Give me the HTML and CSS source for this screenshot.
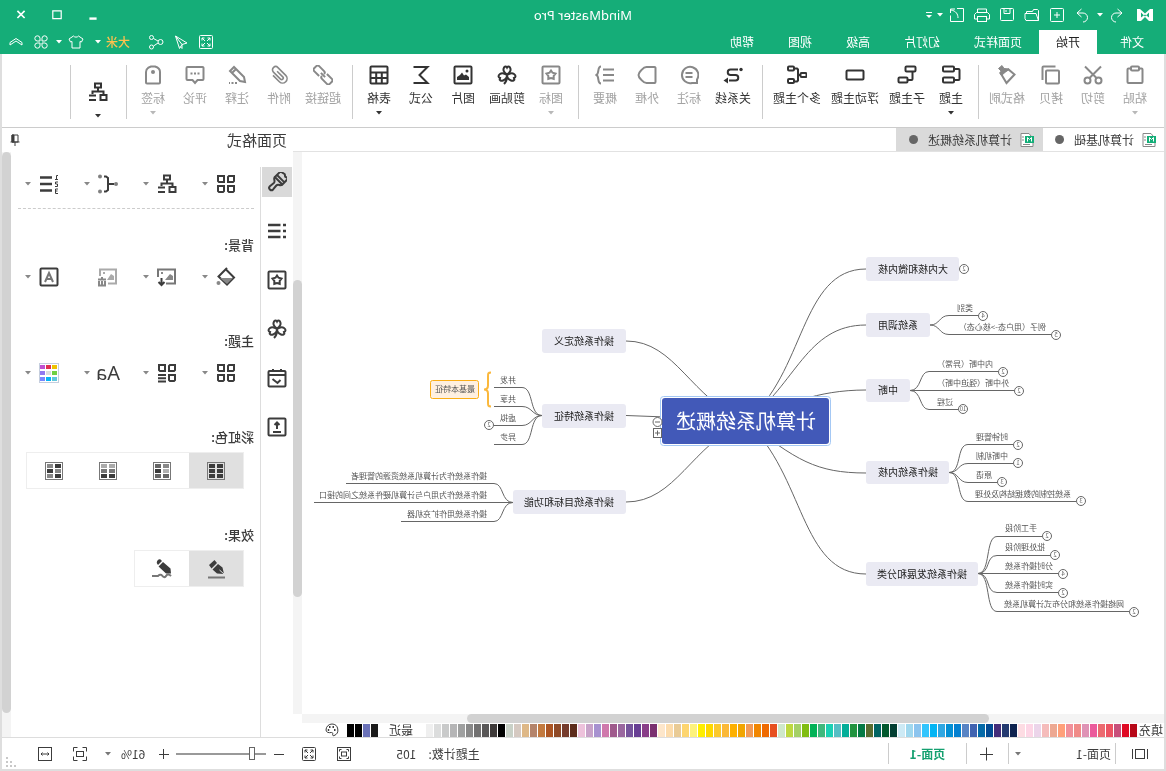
FILE: index.html
```html
<!DOCTYPE html>
<html lang="zh-CN">
<head>
<meta charset="utf-8">
<title>MindMaster Pro</title>
<link rel="stylesheet" href="styles.css">
</head>
<body>
<svg class="sprite" aria-hidden="true">
  <symbol id="caret" viewBox="0 0 6 4"><path d="M0 0h6L3 3.5z" fill="currentColor"/></symbol>
  <symbol id="undo" viewBox="0 0 20 20"><path d="M9.500 4 5 8l4.500 4M5 8h6a4.500 4.500 0 0 1 0 9"/></symbol>
  <symbol id="redo" viewBox="0 0 20 20"><path d="M10.500 4 15 8l-4.500 4M15 8H9a4.500 4.500 0 0 0 0 9"/></symbol>
  <symbol id="new" viewBox="0 0 20 20"><rect x="3.500" y="3.500" width="13" height="13" rx="1"/><path d="M10 7v6M7 10h6"/></symbol>
  <symbol id="open" viewBox="0 0 20 20"><path d="M3.500 15.500v-10l1-1h4l1 2h6v2M3.500 15.500 6 8.500h11v5l-1 2z"/></symbol>
  <symbol id="save" viewBox="0 0 20 20"><rect x="3.500" y="3.500" width="13" height="12" rx="1"/><path d="M7 3.500v5h6v-5M11 5v2"/></symbol>
  <symbol id="print" viewBox="0 0 20 20"><path d="M5.500 7V4h9v3M5 14H2.500V9.500l2-2h11l2 2V14H15"/><rect x="5.500" y="11.500" width="9" height="5"/></symbol>
  <symbol id="export" viewBox="0 0 20 20"><path d="M10 3.500H3.500v13h13v-6M9 13c0-4 2-7 7-8M12 4h4.500v4"/></symbol>
  <symbol id="more" viewBox="0 0 10 10"><path d="M2 2.500h6" /><path d="M2 5h6L5 8z" fill="currentColor" stroke="none"/></symbol>
  <symbol id="full" viewBox="0 0 20 20"><rect x="3.500" y="3.500" width="13" height="13" rx="1"/><path d="M6 8.500V6h2.500M11.500 6H14v2.500M14 11.500V14h-2.500M8.500 14H6v-2.500M6 6l3 3M14 6l-3 3M14 14l-3-3M6 14l3-3"/></symbol>
  <symbol id="send" viewBox="0 0 20 20"><path d="M15.500 4 4 11l5 1.500 2.500 4zM15.500 4 9 12.500v4l2-2"/></symbol>
  <symbol id="share" viewBox="0 0 20 20"><circle cx="5.500" cy="10" r="2.500"/><circle cx="14.500" cy="5.500" r="2"/><circle cx="14.500" cy="15" r="2"/><path d="m8 9 4.500-2.500M8 11l4.500 3"/></symbol>
  <symbol id="shirt" viewBox="0 0 20 20"><path d="M7.500 4 3 7l1.500 3 1.500-.5v6.500h8V9.500l1.500.5L17 7l-4.500-3c-1 1.500-4 1.500-5 0z"/></symbol>
  <symbol id="clover4" viewBox="0 0 20 20"><path d="M9 9H6.200A2.600 2.600 0 1 1 9 6.200zM11 9h2.800A2.600 2.600 0 1 0 11 6.200zM9 11H6.200A2.600 2.600 0 1 0 9 13.800zM11 11h2.800A2.600 2.600 0 1 1 11 13.800z"/></symbol>
  <symbol id="up" viewBox="0 0 20 20"><path d="m4 10.500 6-4 6 4v2.500l-6-4-6 4z"/></symbol>

  <symbol id="paste" viewBox="0 0 20 20"><path d="M6 3.500H3.500a1 1 0 0 0-1 1V17a1 1 0 0 0 1 1h13a1 1 0 0 0 1-1V4.500a1 1 0 0 0-1-1H14"/><rect x="6" y="1.500" width="8" height="4" rx="1"/></symbol>
  <symbol id="cut" viewBox="0 0 20 20"><path d="m2 1.500 11.500 11.500M18 1.500 6.500 13"/><circle cx="4.500" cy="15.500" r="3"/><circle cx="15.500" cy="15.500" r="3"/></symbol>
  <symbol id="copy" viewBox="0 0 20 20"><rect x="2" y="5.500" width="13" height="13" rx="1"/><path d="M5.500 2h12a1 1 0 0 1 1 1v12.500" transform="translate(0 -.5)"/></symbol>
  <symbol id="format" viewBox="0 0 20 20"><path d="m2.500 9.500 6-5 8 3.500-6 10z"/><path d="m8 4 5-.5L15 .500l3.500 3L16 6l1 3-2 1-7-6z" fill="currentColor" stroke-width="1"/></symbol>
  <symbol id="topic" viewBox="0 0 20 20"><path d="M7 4H2.500a1 1 0 0 0-1 1v9a1 1 0 0 0 1 1H7"/><rect x="7" y="1.500" width="11" height="5" rx="1"/><rect x="7" y="12.500" width="11" height="5" rx="1"/></symbol>
  <symbol id="subtopic" viewBox="0 0 20 20"><rect x="1.500" y="1.500" width="10" height="5" rx="1"/><rect x="9.500" y="12.500" width="9" height="5" rx="1"/><path d="M4.500 6.500V14a1 1 0 0 0 1 1h4"/></symbol>
  <symbol id="float" viewBox="0 0 20 20"><rect x="1.500" y="5.500" width="17" height="9" rx="1"/></symbol>
  <symbol id="multi" viewBox="0 0 20 20"><rect x="0.500" y="8" width="6" height="4" rx="1"/><rect x="13" y="1.500" width="6" height="4" rx="1"/><rect x="13" y="14" width="6" height="4" rx="1"/><path d="M6.500 10H9M13 3.500h-3l-1 1v11l1 1h3"/></symbol>
  <symbol id="relation" viewBox="0 0 20 20"><circle cx="2" cy="4.500" r="1.700" fill="currentColor" stroke="none"/><path d="M5 4.500h7.500a2.700 2.700 0 0 1 0 5.500h-5a2.700 2.700 0 0 0 0 5.500H14"/><path d="M15 12.500v6l4.500-3z" fill="currentColor" stroke="none"/></symbol>
  <symbol id="callout" viewBox="0 0 20 20"><path d="M2 18v-3.500A8.200 8.200 0 1 1 7 18zM6.500 8h7M6.500 12h7"/></symbol>
  <symbol id="boundary" viewBox="0 0 20 20"><path d="M2.500 2h8c3 0 4 2 5.500 3.500 2 2 2.500 3 2.500 4.500s-.5 2.500-2.500 4.500C14.500 16 13.500 18 10.500 18h-8a1 1 0 0 1-1-1V3a1 1 0 0 1 1-1z"/></symbol>
  <symbol id="summary" viewBox="0 0 20 20"><path d="M1 4.500h11M1 10h11M1 15.500h11M14 1.500c4 0 1.500 7 4.500 8.500-3 1.500-.5 8.500-4.500 8.500"/></symbol>
  <symbol id="star" viewBox="0 0 20 20"><rect x="1.500" y="1.500" width="17" height="17" rx="1"/><path d="m10 5.500 1.500 2.200 3 .8-1.800 2.300v3L10 13l-2.700.8v-3L5.500 8.500l3-.8z"/></symbol>
  <symbol id="clover" viewBox="0 0 20 20"><path d="M10 9.500C7 7.500 5.500 5 7 2.500c1.300-1.500 2.500-1 3 0 .5-1 1.700-1.500 3 0 1.500 2.500 0 5-3 7zM10 10c-3-2-5-2.500-7-1-2 1.500-2 3 0 4-1 2 1 3.500 3 2.500 2.500-1 4-3 4-5.500zM10 10c3-2 5-2.500 7-1 2 1.500 2 3 0 4 1 2-1 3.500-3 2.500-2.500-1-4-3-4-5.500zM10 10c-.2 4 .5 6.500 3 9"/></symbol>
  <symbol id="picture" viewBox="0 0 20 20"><rect x="1.500" y="1.500" width="17" height="17" rx="1"/><path d="M4 15v-3l3-2.500 2 1L11 7.500l2 2.500 3 2v3z" fill="currentColor" stroke="none"/><circle cx="6" cy="6" r="1.500" fill="currentColor" stroke="none"/></symbol>
  <symbol id="sigma" viewBox="0 0 20 20"><path d="M17.500 2h-14l8 8-8 8h14"/></symbol>
  <symbol id="table" viewBox="0 0 20 20"><rect x="1.500" y="1.500" width="17" height="17" rx="1"/><path d="M1.500 7.500h17M1.500 13h17M7.200 7.500v11M12.800 7.500v11"/></symbol>
  <symbol id="link" viewBox="0 0 20 20"><g transform="rotate(-45 10 10)"><path d="M8 6.500H1a2 2 0 0 0-2 2v3a2 2 0 0 0 2 2h7a2 2 0 0 0 2-2M12 13.500h7a2 2 0 0 0 2-2v-3a2 2 0 0 0-2-2h-7a2 2 0 0 0-2 2M7 10h6"/></g></symbol>
  <symbol id="clip" viewBox="0 0 20 20"><path d="M14.500 6v9a4.500 4.500 0 0 1-9 0V4a3.200 3.200 0 0 1 6.400 0v10a1.600 1.600 0 0 1-3.200 0V6" transform="rotate(45 10 10)" stroke-width="1.600"/></symbol>
  <symbol id="pencil" viewBox="0 0 20 20"><path d="m2 17 1-5L13 2l4 4L7 16zM11 4l4 4"/><path d="M10 18h8" stroke-dasharray="2 1.500"/></symbol>
  <symbol id="comment" viewBox="0 0 20 20"><path d="M2.500 2h15a1 1 0 0 1 1 1v11a1 1 0 0 1-1 1h-5L10 18l-2.500-3h-5a1 1 0 0 1-1-1V3a1 1 0 0 1 1-1z"/><path d="M5.500 8.500h9" stroke-dasharray="2 1.500"/></symbol>
  <symbol id="tag" viewBox="0 0 20 20"><path d="M8 1.500h4c3 1 5 3 5 5.500v10.500a1 1 0 0 1-1 1H4a1 1 0 0 1-1-1V7c0-2.500 2-4.500 5-5.500z"/><circle cx="10" cy="7" r="2" fill="currentColor" stroke="none"/></symbol>
  <symbol id="layout" viewBox="0 0 20 20"><rect x="7" y="1.500" width="6" height="4"/><path d="M10 5.500v3.500M4.500 12V9.500h11V12M12 13.500h7M12 18h7"/><rect x="1.500" y="13" width="6" height="5"/></symbol>

  <symbol id="doc" viewBox="0 0 14 14"><path d="M5 .5h8v13H1v-8z" fill="#fff" stroke="#888"/><path d="M10 4h2M10 7h2M4 11.500h7" stroke="#888"/><rect x="0" y="3" width="9" height="7" fill="#13ae78" stroke="none"/><path d="M2.500 8.500v-4l2 2 2-2v4" stroke="#fff"/></symbol>
  <symbol id="pin" viewBox="0 0 12 12"><path d="M3 1h6v7H3zM1.500 8h9M6 8v4"/><path d="M7 1h2v7H7z" fill="currentColor"/></symbol>
  <symbol id="brush" viewBox="0 0 20 20"><path d="M4.500-.5 8 .5l2-1.500 5 1V8h-10.500zM4.500 5H15M4.500 8c0 3 3.500 2 3.500 5l-.5 5a2.300 2.300 0 0 0 4.600 0l-.6-5c0-3 3.500-2 3.500-5" transform="rotate(-45 10 10)"/></symbol>
  <symbol id="bullets" viewBox="0 0 20 20"><path d="M1 4h3M1 10h3M1 16h3M6.500 4H19M6.500 10H19M6.500 16H19" stroke-width="2.500"/></symbol>
  <symbol id="calendar" viewBox="0 0 20 20"><path d="M2.500 3h15a1 1 0 0 1 1 1v13.500a1 1 0 0 1-1 1h-15a1 1 0 0 1-1-1V4a1 1 0 0 1 1-1zM1.500 7h17M6 1v2M14 1v2M6.500 12l3 3 5-4"/></symbol>
  <symbol id="upload" viewBox="0 0 20 20"><rect x="1.500" y="1.500" width="17" height="17" rx="1"/><path d="M10 12V6M6 15h8M7.500 8 10 5.500 12.500 8"/></symbol>
  <symbol id="squares" viewBox="0 0 20 20"><path d="M2 2h5l1 1v5H3L2 7zM12 2h6v5l-1 1h-5zM2 12h6v5l-1 1H3l-1-1zM12 12h6v5l-1 1h-4l-1-1z"/></symbol>
  <symbol id="squarelist" viewBox="0 0 20 20"><path d="M2 2h5l1 1v5H3L2 7zM12 2h6v5l-1 1h-5zM2 12h6v5l-1 1H3l-1-1zM11 12h8M11 15.200h8M11 18.400h8"/></symbol>
  <symbol id="branch" viewBox="0 0 20 20"><path d="M4 10h6M14 2.500h-2l-2 1.500v12l2 1.500h2"/><g fill="#808080" stroke="none"><circle cx="2" cy="10" r="2"/><circle cx="18" cy="2.500" r="2"/><circle cx="18" cy="17.500" r="2"/></g></symbol>
  <symbol id="numbers" viewBox="0 0 20 20"><path d="M7 3.500h12M7 10h12M7 16.500h12" stroke-width="2.500"/><path d="M1 1.500h1.500v4M1 5.500h3M1 8h2.500v2H1.500v2.500H4M1 15h2.500v4.500H1M1.500 17h2" stroke-width="1"/></symbol>
  <symbol id="bucket" viewBox="0 0 20 20"><path d="m10 2.500-8 8 7 7 8.500-8L9 1"/><path d="M3 11h13l-7 6z" fill="#888" stroke="none"/><circle cx="17.500" cy="16" r="2" fill="#888" stroke="none"/></symbol>
  <symbol id="picdown" viewBox="0 0 20 20"><path d="M11 16.500H2v-14h17V10" stroke="#777"/><path d="M4 13V9l3-2 5 6zM14 5h2v2h-2z" fill="#888" stroke="none"/><path d="M15.500 11v7M12.500 15l3 3 3-3"/></symbol>
  <symbol id="picdel" viewBox="0 0 20 20"><path d="M10 16.500H2v-14h16V9" stroke="#aaa"/><path d="M4 13V9l3-2 4 6zM13 5h2v2h-2z" fill="#aaa" stroke="none"/><path d="M12 12.500h8M16 12V10M13 14v4.500h6V14M16 14v4" stroke="#888"/></symbol>
  <symbol id="watermark" viewBox="0 0 20 20"><rect x="1.500" y="1.500" width="17" height="17" rx="1"/><path d="m6 15 4-9 4 9M7.500 12h5" stroke="#777"/></symbol>
  <symbol id="palette9" viewBox="0 0 20 20"><rect x=".5" y=".5" width="19" height="19" stroke="#c5cede" stroke-width="1" fill="#fff"/><g stroke="none"><path fill="#eec200" d="M2 2h5v4H2z"/><path fill="#e0304e" d="M8 2h5v4H8z"/><path fill="#c050d0" d="M14 2h5v4h-5z"/><path fill="#70d040" d="M2 8h5v4H2z"/><path fill="#ddd" d="M8 8h5v4H8z"/><path fill="#9078f0" d="M14 8h5v4h-5z"/><path fill="#60c8dc" d="M2 14h5v4H2z"/><path fill="#04b4f4" d="M8 14h5v4H8z"/><path fill="#7888ff" d="M14 14h5v4h-5z"/></g></symbol>
  <symbol id="rb1" viewBox="0 0 20 20"><rect x="1.500" y="1.500" width="17" height="17" stroke="#777" stroke-width="1"/><path stroke="none" fill="#3c3c3c" d="M3 3h6v4H3zM11 3h6v4h-6zM3 8h6v4H3zM11 8h6v4h-6zM3 13h6v4H3zM11 13h6v4h-6z"/></symbol>
  <symbol id="rb2" viewBox="0 0 20 20"><rect x="1.500" y="1.500" width="17" height="17" stroke="#777" stroke-width="1"/><g stroke="none"><path fill="#666" d="M11 3h6v4h-6zM3 13h6v4H3zM11 13h6v4h-6z"/><path fill="#888" d="M3 3h6v4H3z"/><path fill="#b0b0b0" d="M3 8h6v4H3z"/><path fill="#3c3c3c" d="M11 8h6v4h-6z"/></g></symbol>
  <symbol id="rb3" viewBox="0 0 20 20"><rect x="1.500" y="1.500" width="17" height="17" stroke="#777" stroke-width="1"/><g stroke="none"><path fill="#aaa" d="M3 3h6v4H3zM11 3h6v4h-6z"/><path fill="#777" d="M3 8h6v4H3zM11 8h6v4h-6z"/><path fill="#3c3c3c" d="M3 13h6v4H3zM11 13h6v4h-6z"/></g></symbol>
  <symbol id="rb4" viewBox="0 0 20 20"><rect x="1.500" y="1.500" width="17" height="17" stroke="#777" stroke-width="1"/><g stroke="none"><path fill="#3c3c3c" d="M3 3h6v4H3zM11 8h6v4h-6zM3 13h6v4H3z"/><path fill="#888" d="M11 3h6v4h-6zM3 8h6v4H3zM11 13h6v4h-6z"/></g></symbol>
  <symbol id="penline" viewBox="0 0 20 20"><path d="M1 18.500h17" stroke="#777"/><path d="m2 15 1.500-6.500L8 5l5.500 5.500L9 14.500zM9 4l2.500-3L17 6l-2.500 3.500z" fill="currentColor" stroke="none"/><path d="m2 15 4.500-4" stroke="#e0e0e0" stroke-width="1"/></symbol>
  <symbol id="pensketch" viewBox="0 0 20 20"><path d="M1 17c2-2 4-2 5 0s3 1 4-.5 3-.5 4 .5h6" stroke="#777"/><path d="m1 14.500.5-5L9 3l4.500 4.500-7.500 7zM10 2l1.500-1.500c2-1 4.500 2 3.500 4L14 6z" fill="currentColor" stroke="none"/></symbol>
  <symbol id="wheel" viewBox="0 0 14 14"><path d="M7 1a6 6 0 0 0-2 11.600c1.500.4 1.500-.6 1.300-1.500-.3-1 .4-1.900 1.400-1.600C10 10 13 9.500 13 7a6 6 0 0 0-6-6z"/><path d="M3.500 7h1.500M5 4h1.500M8.500 4H10M9.800 7h1.400" stroke-width="2"/></symbol>

  <symbol id="pages" viewBox="0 0 20 20"><path d="M2.500 5v10M17.500 5v10"/><rect x="5.500" y="5.500" width="9" height="9"/></symbol>
  <symbol id="fitpage" viewBox="0 0 20 20"><rect x="3.500" y="3.500" width="13" height="13"/><rect x="7.500" y="8" width="5" height="4"/><path d="M5.500 7.500v-2h2M12.500 5.500h2v2M14.500 12.500v2h-2M7.500 14.500h-2v-2"/></symbol>
  <symbol id="fitsel" viewBox="0 0 20 20"><path d="M3.500 7.500v-4h4M12.500 3.500h4v4M16.500 12.500v4h-4M7.500 16.500h-4v-4"/><rect x="6.500" y="7.500" width="7" height="5"/></symbol>
  <symbol id="fitwidth" viewBox="0 0 20 20"><rect x="3.500" y="3.500" width="13" height="13"/><path d="M6 10h8M7.500 8.500 6 10l1.500 1.500M12.500 8.500 14 10l-1.500 1.500"/></symbol>
  <symbol id="plus" viewBox="0 0 14 14"><path d="M7.500 .5v13M1 7.500h13"/></symbol>
</svg>

<div class="app">
  <header class="titlebar">
    <div class="quick">
      <svg class="logo" viewBox="0 0 18 14"><path d="M1 1h3l5 4.500L14 1h3v12h-4l-4-4-4 4H1z" fill="#fff"/><path d="m5 4.500 4 4 4-4v5L9 6.500 5 9.500z" fill="#15ad78"/></svg>
      <button aria-label="撤销"><svg><use href="#undo"/></svg></button><button class="drop" aria-label="撤销列表"><svg><use href="#caret"/></svg></button>
      <button aria-label="重做"><svg><use href="#redo"/></svg></button><button aria-label="新建"><svg><use href="#new"/></svg></button><button aria-label="打开"><svg><use href="#open"/></svg></button><button aria-label="保存"><svg><use href="#save"/></svg></button><button aria-label="打印"><svg><use href="#print"/></svg></button><button aria-label="导出"><svg><use href="#export"/></svg></button><button class="drop" aria-label="导出列表"><svg><use href="#caret"/></svg></button>
      <button class="morebtn" aria-label="自定义"><svg><use href="#more"/></svg></button>
    </div>
    <h1>MindMaster Pro</h1>
    <div class="winbtns">
      <button aria-label="最小化"><svg viewBox="0 0 10 10"><path d="M2 8h6" stroke-width="2"/></svg></button>
      <button aria-label="最大化"><svg viewBox="0 0 10 10"><path d="M1.500 1.500h7V8h-7z"/></svg></button>
      <button aria-label="关闭"><svg viewBox="0 0 10 10"><path d="m2 1.500 6 6M8 1.500l-6 6" stroke-width="1.400"/></svg></button>
    </div>
  </header>
  <nav class="menubar">
    <div class="menus">
      <button class="file">文件</button><button class="on">开始</button><button>页面样式</button><button>幻灯片</button><button>高级</button><button>视图</button><button>帮助</button>
    </div>
    <div class="tools">
      <button aria-label="全屏"><svg><use href="#full"/></svg></button><button aria-label="发送"><svg><use href="#send"/></svg></button><button aria-label="分享"><svg><use href="#share"/></svg></button>
      <button class="user">大米</button><button class="drop userdrop" aria-label="账户"><svg><use href="#caret"/></svg></button>
      <button aria-label="皮肤"><svg><use href="#shirt"/></svg></button><button class="drop" aria-label="皮肤列表"><svg><use href="#caret"/></svg></button>
      <button aria-label="应用"><svg><use href="#clover4"/></svg></button><button aria-label="收起"><svg><use href="#up"/></svg></button>
    </div>
  </nav>

  <div class="frame">
    <div class="ribbon">
      <button class="off"><svg><use href="#paste"/></svg><span>粘贴</span><svg class="c"><use href="#caret"/></svg></button>
      <button class="off"><svg><use href="#cut"/></svg><span>剪切</span></button>
      <button class="off"><svg><use href="#copy"/></svg><span>拷贝</span></button>
      <button class="off"><svg><use href="#format"/></svg><span>格式刷</span></button>
      <i></i>
      <button><svg><use href="#topic"/></svg><span>主题</span><svg class="c"><use href="#caret"/></svg></button>
      <button><svg><use href="#subtopic"/></svg><span>子主题</span></button>
      <button><svg><use href="#float"/></svg><span>浮动主题</span></button>
      <button><svg><use href="#multi"/></svg><span>多个主题</span></button>
      <i></i>
      <button><svg><use href="#relation"/></svg><span>关系线</span></button>
      <button class="off"><svg><use href="#callout"/></svg><span>标注</span></button>
      <button class="off"><svg><use href="#boundary"/></svg><span>外框</span></button>
      <button class="off"><svg><use href="#summary"/></svg><span>概要</span></button>
      <i></i>
      <button class="off"><svg><use href="#star"/></svg><span>图标</span><svg class="c"><use href="#caret"/></svg></button>
      <button><svg><use href="#clover"/></svg><span>剪贴画</span></button>
      <button><svg><use href="#picture"/></svg><span>图片</span></button>
      <button><svg><use href="#sigma"/></svg><span>公式</span></button>
      <button><svg><use href="#table"/></svg><span>表格</span><svg class="c"><use href="#caret"/></svg></button>
      <i></i>
      <button class="off"><svg><use href="#link"/></svg><span>超链接</span></button>
      <button class="off"><svg><use href="#clip"/></svg><span>附件</span></button>
      <button class="off"><svg><use href="#pencil"/></svg><span>注释</span></button>
      <button class="off"><svg><use href="#comment"/></svg><span>评论</span></button>
      <button class="off"><svg><use href="#tag"/></svg><span>标签</span><svg class="c"><use href="#caret"/></svg></button>
      <i></i>
      <button class="tall" aria-label="布局"><svg><use href="#layout"/></svg><svg class="c"><use href="#caret"/></svg></button>
      <i></i>
    </div>

    <div class="work">
      <main class="editor">
        <div class="docs">
          <button><svg><use href="#doc"/></svg>计算机基础<b></b></button>
          <button class="cur"><svg><use href="#doc"/></svg>计算机系统概述<b></b></button>
        </div>
        <div class="view">
          <svg class="board">
            <g transform="translate(-2 -152)">
              <g class="edge">
                <path d="M420 421C361 375 366 269 300 269M420 421C370 385 360 325 300 325M420 421C380 405 350 390 300 390M420 421C370 460 350 473 300 473M420 421C361 475 366 574 300 574"/>
                <path d="M420 421C475 400 490 341 540 341M500 417 540 415.500M420 421C475 445 490 502 540 502"/>
                <path d="M236 325C226 325 227 315.500 217 315.500H188M236 325C226 325 227 334.500 217 334.500H115"/>
                <path d="M256 390.500C244 390.500 247 371.500 237 371.500H168M256 390.500H152M256 390.500C244 390.500 247 409.500 237 409.500H208"/>
                <path d="M217 472.500C204 472.500 210 444.500 198 444.500H153M217 472.500C207 472.500 208 463.500 198 463.500H153M217 472.500C207 472.500 208 482.500 198 482.500H169M217 472.500C204 472.500 210 501.500 198 501.500H90"/>
                <path d="M188 573.500C175 573.500 181 536.500 169 536.500H124M188 573.500C175 573.500 181 555.500 169 555.500H116M188 573.500H108M188 573.500C175 573.500 181 592.500 169 592.500H108M188 573.500C175 573.500 181 611.500 169 611.500H37"/>
                <path d="M624 415.500C637 415.500 632 387.500 644 387.500H672M624 415.500C634 415.500 634 406.500 644 406.500H672M624 415.500C634 415.500 634 425.500 644 425.500H672M624 415.500C637 415.500 632 444.500 644 444.500H672"/>
                <path d="M653 502.500C665 502.500 662 483.500 672 483.500H820M653 502.500H852M653 502.500C665 502.500 662 521.500 672 521.500H765"/>
              </g>
              <g class="node">
                <rect x="207" y="257" width="93" height="24" rx="3"/><rect x="236" y="313" width="64" height="24" rx="3"/><rect x="256" y="379" width="44" height="23" rx="3"/><rect x="217" y="461" width="83" height="23" rx="3"/><rect x="188" y="562" width="112" height="24" rx="3"/>
                <rect x="540" y="329" width="84" height="24" rx="3"/><rect x="540" y="404" width="84" height="24" rx="3"/><rect x="540" y="490" width="113" height="24" rx="3"/>
              </g>
              <g class="branch">
                <text x="218" y="273">大内核和微内核</text><text x="248" y="329">系统调用</text><text x="268" y="394">中断</text><text x="228" y="476">操作系统内核</text><text x="199" y="578">操作系统发展和分类</text>
                <text x="552" y="345">操作系统定义</text><text x="552" y="420">操作系统特征</text><text x="552" y="506">操作系统目标和功能</text>
              </g>
              <rect class="ring" x="335.500" y="396.500" width="170" height="49" rx="3"/>
              <rect class="root" x="337" y="398" width="167" height="46" rx="3"/>
              <text class="roottext" x="350" y="429">计算机系统概述</text>
              <g class="leaf">
                <text x="193" y="311">类别</text><text x="120" y="330">例子（用户态-&gt;核心态）</text>
                <text x="173" y="367">内中断（异常）</text><text x="157" y="386">外中断（强迫中断）</text><text x="213" y="405">过程</text>
                <text x="158" y="440">时钟管理</text><text x="158" y="459">中断机制</text><text x="174" y="478">原语</text><text x="95" y="497">系统控制的数据结构及处理</text>
                <text x="129" y="531">手工阶段</text><text x="121" y="550">批处理阶段</text><text x="113" y="569">分时操作系统</text><text x="113" y="588">实时操作系统</text><text x="42" y="607">网络操作系统和分布式计算机系统</text>
                <text x="650" y="383">并发</text><text x="650" y="402">共享</text><text x="650" y="421">虚拟</text><text x="650" y="440">异步</text>
                <text x="679" y="479">操作系统作为计算机系统资源的管理者</text><text x="679" y="498">操作系统作为用户与计算机硬件系统之间的接口</text><text x="679" y="517">操作系统用作扩充机器</text>
              </g>
              <path class="brace" d="M675 372.500c3 0 3 1 3 4v9c0 3 1 4 4 4-3 0-4 1-4 4v9c0 3 0 4-3 4"/>
              <rect class="note" x="687.500" y="380.500" width="48" height="18" rx="2"/><text class="notetext" x="691" y="392">最基本特征</text>
              <g class="count">
                <circle cx="202" cy="269" r="4.500"/><circle cx="183" cy="316" r="4.500"/><circle cx="110" cy="335" r="4.500"/><circle cx="163" cy="372" r="4.500"/><circle cx="147" cy="391" r="4.500"/><circle cx="203" cy="409" r="4.500"/><circle cx="148" cy="445" r="4.500"/><circle cx="148" cy="463" r="4.500"/><circle cx="164" cy="482" r="4.500"/><circle cx="85" cy="501" r="4.500"/><circle cx="119" cy="536" r="4.500"/><circle cx="111" cy="555" r="4.500"/><circle cx="103" cy="574" r="4.500"/><circle cx="103" cy="593" r="4.500"/><circle cx="32" cy="612" r="4.500"/><circle cx="677" cy="425" r="4.500"/>
                <text x="202" y="271">2</text><text x="183" y="318">4</text><text x="110" y="337">5</text><text x="163" y="374">2</text><text x="147" y="393">2</text><text x="203" y="411">10</text><text x="148" y="447">2</text><text x="148" y="465">1</text><text x="164" y="484">3</text><text x="85" y="503">3</text><text x="119" y="538">2</text><text x="111" y="557">2</text><text x="103" y="576">4</text><text x="103" y="595">2</text><text x="32" y="614">2</text><text x="677" y="427">2</text>
                <circle cx="508.500" cy="422" r="4.500"/><path d="M506 422h5"/><rect x="504.500" y="428.500" width="8" height="9"/><path d="M506 433h5M508.500 430.500v5"/>
              </g>
            </g>
          </svg>
          <div class="vbar"><div></div></div>
          <div class="hbar"><div></div></div>
        </div>
        <div class="colors">
          <span>填充</span><div class="swatches" id="palette"></div><span class="recent">最近</span><div class="swatches" id="recent"></div>
          <button class="morecolors" aria-label="更多颜色"><svg><use href="#wheel"/></svg></button>
        </div>
      </main>

      <aside class="dock">
        <div class="dockhead"><h2>页面格式</h2><button aria-label="固定"><svg><use href="#pin"/></svg></button></div>
        <div class="dockbody">
          <div class="rail">
            <button class="cur" aria-label="页面格式"><svg><use href="#brush"/></svg></button><button aria-label="大纲"><svg><use href="#bullets"/></svg></button><button aria-label="图标"><svg><use href="#star"/></svg></button><button aria-label="剪贴画"><svg><use href="#clover"/></svg></button><button aria-label="任务"><svg><use href="#calendar"/></svg></button><button aria-label="导出"><svg><use href="#upload"/></svg></button>
          </div>
          <div class="panel">
            <div class="row first">
              <button aria-label="结构"><svg><use href="#squares"/></svg><svg class="c"><use href="#caret"/></svg></button><button aria-label="布局"><svg><use href="#layout"/></svg><svg class="c"><use href="#caret"/></svg></button><button aria-label="连接线"><svg><use href="#branch"/></svg><svg class="c"><use href="#caret"/></svg></button><button aria-label="编号"><svg><use href="#numbers"/></svg><svg class="c"><use href="#caret"/></svg></button>
            </div>
            <h3>背景:</h3>
            <div class="row">
              <button aria-label="背景颜色"><svg><use href="#bucket"/></svg><svg class="c"><use href="#caret"/></svg></button><button aria-label="插入背景图"><svg><use href="#picdown"/></svg><svg class="c"><use href="#caret"/></svg></button><button aria-label="删除背景图"><svg><use href="#picdel"/></svg></button><button aria-label="水印"><svg><use href="#watermark"/></svg><svg class="c"><use href="#caret"/></svg></button>
            </div>
            <h3>主题:</h3>
            <div class="row">
              <button aria-label="主题"><svg><use href="#squares"/></svg><svg class="c"><use href="#caret"/></svg></button><button aria-label="主题样式"><svg><use href="#squarelist"/></svg><svg class="c"><use href="#caret"/></svg></button><button class="font" aria-label="主题字体"><span>Aa</span><svg class="c"><use href="#caret"/></svg></button><button aria-label="主题颜色"><svg><use href="#palette9"/></svg><svg class="c"><use href="#caret"/></svg></button>
            </div>
            <h3>彩虹色:</h3>
            <div class="seg"><button class="cur" aria-label="单色"><svg><use href="#rb1"/></svg></button><button aria-label="彩虹一"><svg><use href="#rb2"/></svg></button><button aria-label="彩虹二"><svg><use href="#rb3"/></svg></button><button aria-label="彩虹三"><svg><use href="#rb4"/></svg></button></div>
            <h3>效果:</h3>
            <div class="seg"><button class="cur" aria-label="直线"><svg><use href="#penline"/></svg></button><button aria-label="手绘"><svg><use href="#pensketch"/></svg></button></div>
          </div>
          <div class="pbar"><div></div></div>
        </div>
      </aside>
    </div>

    <footer class="status">
      <button class="ic pagesbtn" aria-label="页面列表"><svg><use href="#pages"/></svg></button><i></i>
      <button class="pagepick">页面-1<svg class="c"><use href="#caret"/></svg></button><i></i>
      <button class="add" aria-label="新建页面"><svg><use href="#plus"/></svg></button><i></i>
      <button class="page">页面-1</button><i></i>
      <span class="total">主题计数:<span>105</span></span>
      <button class="ic" aria-label="适应页面"><svg><use href="#fitpage"/></svg></button><button class="ic" aria-label="全屏"><svg><use href="#full"/></svg></button>
      <button class="step" aria-label="缩小"><svg viewBox="0 0 10 10"><path d="M0 5.500h10"/></svg></button>
      <input type="range" min="0" max="100" value="14" aria-label="缩放">
      <button class="step" aria-label="放大"><svg viewBox="0 0 10 10"><path d="M0 5.500h10M5.500 0v10"/></svg></button>
      <button class="zoom">61%<svg class="c"><use href="#caret"/></svg></button>
      <button class="ic" aria-label="适应选择"><svg><use href="#fitsel"/></svg></button><button class="ic" aria-label="适应宽度"><svg><use href="#fitwidth"/></svg></button>
      <svg class="grip" viewBox="0 0 12 12"><path d="M8 1h2v2H8zM4 5h2v2H4zM8 5h2v2H8zM0 9h2v2H0zM4 9h2v2H4zM8 9h2v2H8z" fill="#c8c8c8"/></svg>
    </footer>
  </div>
</div>
<script src="colors.js"></script>
</body>
</html>
```

FILE: styles.css
```css
* { box-sizing: border-box; }
html, body { height: 100%; margin: 0; overflow: hidden; }
body { font: 12px/16px "Noto Sans CJK SC", sans-serif; color: #3c3c3c; background: #fff; }
button { border: 0; padding: 0; margin: 0; background: none; font: inherit; color: inherit; display: flex; align-items: center; justify-content: center; white-space: nowrap; }
h1, h2, h3 { margin: 0; font-weight: 400; }
svg { display: block; width: 20px; height: 20px; flex: none; fill: none; stroke: currentColor; }
.sprite { display: none; }
.c, .drop svg { width: 6px; height: 4px; stroke: none; }

/* the whole window is shown as in a mirror */
.app { height: 100vh; display: flex; flex-direction: column; transform: scaleX(-1); }

.titlebar { height: 30px; background: #15ad78; color: #fff; display: grid; grid-template-columns: 1fr auto 1fr; align-items: center; flex: none; }
.quick { display: flex; align-items: center; padding-left: 12px; }
.quick button { width: 25px; height: 26px; }
.quick .drop, .tools .drop { width: 10px; }
.quick .morebtn { width: 12px; }
.morebtn svg { width: 10px; height: 10px; }
.logo { width: 18px; height: 14px; margin-right: 6px; stroke: none; }
.titlebar h1 { font: 13px/16px "Noto Sans", sans-serif; }
.winbtns { display: flex; justify-content: flex-end; padding-right: 3px; }
.winbtns button { width: 36px; height: 26px; }
.winbtns svg { width: 12px; height: 12px; }

.menubar { height: 24px; background: #15ad78; color: #fff; display: flex; justify-content: space-between; flex: none; }
.menus, .tools { display: flex; }
.menus { padding-left: 5px; }
.menus button { padding: 0 17px; }
.menus .file { margin-right: 6px; }
.menus .on { background: #fff; color: #222; }
.tools { padding-right: 4px; align-items: center; }
.tools button { width: 25px; }
.tools .user { width: 24px; margin: 0 3px 0 14px; color: #ffc14d; font-weight: 500; }
.tools .userdrop { margin-right: 4px; }

.frame { flex: 1; min-height: 0; display: flex; flex-direction: column; border: solid #dedede; border-width: 0 2px 2px; }
.ribbon { height: 74px; flex: none; display: flex; padding: 11px 0 0 8px; border-bottom: 1px solid #ccc; }
.ribbon button { flex-direction: column; justify-content: flex-start; min-width: 42px; padding: 0 5px; height: 54px; color: #333; stroke-width: 2; }
.ribbon button > svg:first-child { width: 20px; height: 20px; }
.ribbon span { margin-top: 5px; }
.ribbon .c { margin-top: 5px; }
.ribbon .off { color: #888; }
.ribbon .off span { color: #a2a2a2; }
.ribbon .off .c { color: #b8b8b8; }
.ribbon i { width: 1px; height: 54px; background: #ccc; margin: 0 6px 0 5px; }
.ribbon .tall { padding-top: 17px; margin: 0 1px; }
.ribbon .tall .c { margin-top: 12px; }

.work { flex: 1; min-height: 0; display: flex; }
.editor { flex: 1; min-width: 0; display: flex; flex-direction: column; }
.docs { height: 24px; flex: none; display: flex; border-bottom: 1px solid #e2e2e2; }
.docs button { padding: 0 12px 0 8px; }
.docs button + button { padding-right: 13px; padding-left: 9px; }
.docs svg { width: 14px; height: 14px; margin-right: 8px; }
.docs b { width: 9px; height: 9px; border-radius: 5px; background: #666; margin-left: 10px; }
.docs .cur { background: #dadada; }
.view { flex: 1; min-height: 0; display: grid; grid-template: 1fr 9px / 1fr 9px; }
.board { width: 100%; height: 100%; }
.vbar, .hbar, .pbar { background: #f4f4f4; }
.vbar { padding-top: 128px; }
.vbar div { height: 73%; }
.hbar { padding-left: 175px; }
.hbar div { width: 76%; height: 9px; }
.vbar div, .hbar div, .pbar div { background: #d2d2d2; border-radius: 5px; }
.colors { height: 14px; flex: none; display: flex; align-items: center; padding-left: 1px; line-height: 14px; }
.colors span { width: 26px; flex: none; white-space: nowrap; }
.colors .recent { width: 24px; margin: 0 11px 0 13px; }
.morecolors { margin-left: 8px; }
.morecolors svg { width: 14px; height: 14px; }
.swatches { display: flex; gap: 1px; }
.swatches button { width: 7px; height: 13px; }

.edge { stroke: #666; }
.node { fill: #eaeaf3; stroke: none; }
.board text { stroke: none; fill: #222; }
.branch text { font-size: 10px; }
.board .leaf text, .board .notetext { font-size: 8px; fill: #555; }
.ring { fill: #fff; stroke: #a4c8f4; }
.root { fill: #4259b8; stroke: none; }
.board .roottext { font-size: 20px; fill: #fff; }
.brace { stroke: #fbb83c; stroke-width: 2; }
.note { fill: #fff0e0; stroke: #fbae17; stroke-width: 1; }
.count { fill: #fff; stroke: #666; }
.board .count text { font-size: 6px; text-anchor: middle; fill: #666; }

.dock { width: 291px; flex: none; display: flex; flex-direction: column; }
.dockhead { height: 24px; display: flex; justify-content: space-between; align-items: center; padding: 0 7px 0 6px; }
.dockhead h2 { font-size: 15px; line-height: 20px; }
.dockhead svg { width: 12px; height: 12px; }
.dockbody { flex: 1; min-height: 0; display: flex; }
.rail { width: 33px; margin-top: 15px; padding-left: 1px; border-right: 1px solid #ddd; display: flex; flex-direction: column; gap: 19px; }
.rail button { width: 30px; height: 30px; stroke-width: 2; }
.rail .cur { background: #d9d9d9; }
.panel { flex: 1; padding: 15px 7px 0 6px; }
.row { display: flex; height: 34px; stroke-width: 2; }
.row button { width: 59px; justify-content: flex-start; padding-left: 18px; }
.row .c { margin-left: 8px; color: #888; }
.row.first { height: 42px; padding-bottom: 8px; border-bottom: 1px dashed #ccc; }
.row .font { padding-left: 16px; }
.font span { font: 20px/24px "Noto Sans", sans-serif; width: 24px; }
.font .c { margin-left: 6px; }
.panel h3 { font-size: 13px; line-height: 18px; margin-top: 37px; font-weight: 500; }
.panel .row + h3 { margin-top: 38px; }
.panel .first + h3 { margin-top: 27px; }
.panel h3 + .row { margin-top: 6px; }
.seg { display: flex; width: max-content; margin: 6px 0 0 10px; border: 1px solid #eee; }
.seg button { width: 54px; height: 35px; stroke-width: 2; }
.seg .cur { background: #e0e0e0; }
.pbar { width: 9px; padding-bottom: 24px; }
.pbar div { height: 100%; }

.status { height: 32px; flex: none; border-top: 1px solid #ddd; display: flex; align-items: center; }
.status i { width: 1px; height: 21px; background: #ccc; }
.status .ic { width: 35px; height: 26px; }
.status .pagesbtn { width: 48px; }
.pagepick { width: 106px; padding: 0 6px 0 4px; justify-content: space-between; }
.add { width: 41px; }
.add svg { width: 14px; height: 14px; }
.page { width: 77px; color: #15a070; font-weight: 700; }
.total { margin-left: auto; margin-right: 35px; }
.total span { margin-left: 12px; }
.step { width: 25px; }
.step svg { width: 10px; height: 10px; }
.status input { appearance: none; width: 90px; height: 14px; margin: 0; background: linear-gradient(#999, #999) center / 100% 2px no-repeat; }
.status input::-webkit-slider-thumb { appearance: none; width: 6px; height: 13px; background: #fff; border: 1px solid #666; }
.zoom { margin: 0 7px 0 6px; }
.status .c { color: #777; }
.zoom .c { margin-left: 10px; }
.grip { width: 12px; height: 12px; margin: 16px 2px 0 12px; stroke: none; }
```

FILE: colors.js
```js
const palette = "b70818 df0a24 c84f7a ec5463 ec6a70 eb5b9c df93b5 f08b88 f1909a ffa07a eda892 f5bcbb ecd5ea fdd6e6 fddce3 0f2350 243a70 432d7a 024b93 046aa8 4163b0 5884c4 0380d0 038fd4 2fa7e2 03b5f4 33c5fd 8cc4ee a0d8ee cdeaf5 023f32 02592e 016563 596d30 047a45 21933f 03ae99 56bec4 1bd0b3 3fb87d 02b257 81bd12 a5d066 bed840 cfe8c9 e75020 ee6a00 f18600 f29a55 f1a500 fdb000 fbb938 fbc92d fed800 feee00 fdf27b fdd56f e9cb96 fcdcad fde6ca 7b3070 893e88 683f94 76549c 9a679f 9f5a8c cf79ac a792d0 c8a3c9 edc2db 5d2c1b 763c2d 8f4a27 ac5523 c37a3f b4846b deb887 d5c9c1 c9d1c7 000000 3e3a39 595757 727171 898989 9fa0a0 b5b5b6 c9caca dcdddd efefef";
const recent = "1a1a1a 6b72b8 000000 000000";

function fill(id, list) {
  const box = document.getElementById(id);
  for (const color of list.split(" ")) {
    const swatch = document.createElement("button");
    swatch.style.background = "#" + color;
    swatch.setAttribute("aria-label", "#" + color);
    box.append(swatch);
  }
}

fill("palette", palette);
fill("recent", recent);
```
